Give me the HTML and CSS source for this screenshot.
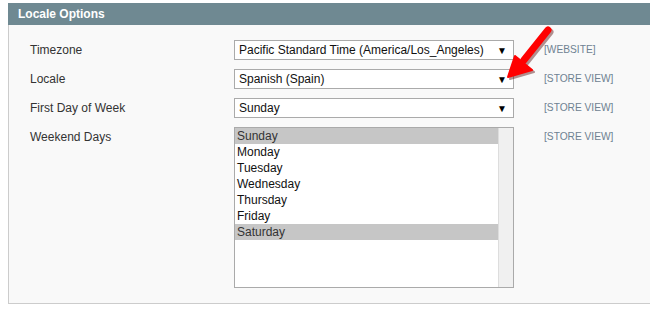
FILE: index.html
```html
<!DOCTYPE html>
<html lang="en">
<head>
  <meta charset="UTF-8">
  <title>Locale Options</title>
  <link rel="stylesheet" href="styles.css">
</head>
<body>
  <div class="section">
    <div class="section-head">Locale Options</div>
    <div class="fieldset">
      <div class="row">
        <div class="label">Timezone</div>
        <div class="select"><span>Pacific Standard Time (America/Los_Angeles)</span><i>&#9660;</i></div>
        <div class="scope">[WEBSITE]</div>
      </div>
      <div class="row">
        <div class="label">Locale</div>
        <div class="select"><span>Spanish (Spain)</span><i>&#9660;</i></div>
        <div class="scope">[STORE VIEW]</div>
      </div>
      <div class="row">
        <div class="label">First Day of Week</div>
        <div class="select"><span>Sunday</span><i>&#9660;</i></div>
        <div class="scope">[STORE VIEW]</div>
      </div>
      <div class="row">
        <div class="label">Weekend Days</div>
        <div class="multi">
          <ul>
            <li class="on">Sunday</li>
            <li>Monday</li>
            <li>Tuesday</li>
            <li>Wednesday</li>
            <li>Thursday</li>
            <li>Friday</li>
            <li class="on">Saturday</li>
          </ul>
          <div class="track"></div>
        </div>
        <div class="scope">[STORE VIEW]</div>
      </div>
    </div>

    <!-- red pointer arrow -->
    <svg class="pointer" width="70" height="80" viewBox="0 0 70 80">
      <g transform="translate(2,2)" fill="#5a1010" stroke="#5a1010" opacity="0.45">
        <line x1="48" y1="10" x2="24" y2="40" stroke-width="7" stroke-linecap="round"/>
        <polygon points="8,57 15,36 32,50" stroke-width="2" stroke-linejoin="round"/>
      </g>
      <g fill="#f00" stroke="#f00">
        <line x1="48" y1="10" x2="24" y2="40" stroke-width="7" stroke-linecap="round"/>
        <polygon points="8,57 15,36 32,50" stroke-width="2" stroke-linejoin="round"/>
      </g>
    </svg>
  </div>
</body>
</html>
```

FILE: styles.css
```css
* { margin: 0; padding: 0; box-sizing: border-box; }
html, body { overflow: hidden; }
body { background: #fff; font-family: Arial, "Liberation Sans", sans-serif; font-size: 12px; color: #333; }

.section { position: relative; margin: 3px 0 0 8px; width: 660px; }
.section-head { background: #6f8992; color: #fff; font-weight: bold; height: 22px; line-height: 22px; padding-left: 10px; }
.fieldset { background: #f9f9f9; border: 1px solid #ccc; border-top: 0; padding: 15px 0 15px 21px; display: flex; flex-direction: column; gap: 9px; }

.row { display: grid; grid-template-columns: 204px 280px auto; align-items: start; }
.label { height: 20px; line-height: 20px; color: #333; }
.scope { height: 20px; line-height: 20px; color: #6f8292; font-size: 10.2px; padding-left: 30px; white-space: nowrap; }

.select { height: 20px; background: #fff; border: 1px solid #aaa; display: flex; align-items: center; justify-content: space-between; padding: 0 6px 0 4px; color: #111; white-space: nowrap; }
.select i { font-style: normal; font-size: 10px; color: #000; }

.multi { height: 161px; background: #fff; border: 1px solid #aaa; display: flex; }
.multi ul { list-style: none; flex: 1; }
.multi li { height: 16px; line-height: 16px; padding-left: 2px; color: #111; }
.multi li.on { background: #c6c6c6; color: #333; }
.multi .track { width: 15px; background: #f0f0f0; border-left: 1px solid #ddd; }

.pointer { position: absolute; left: 492px; top: 17px; }
```
